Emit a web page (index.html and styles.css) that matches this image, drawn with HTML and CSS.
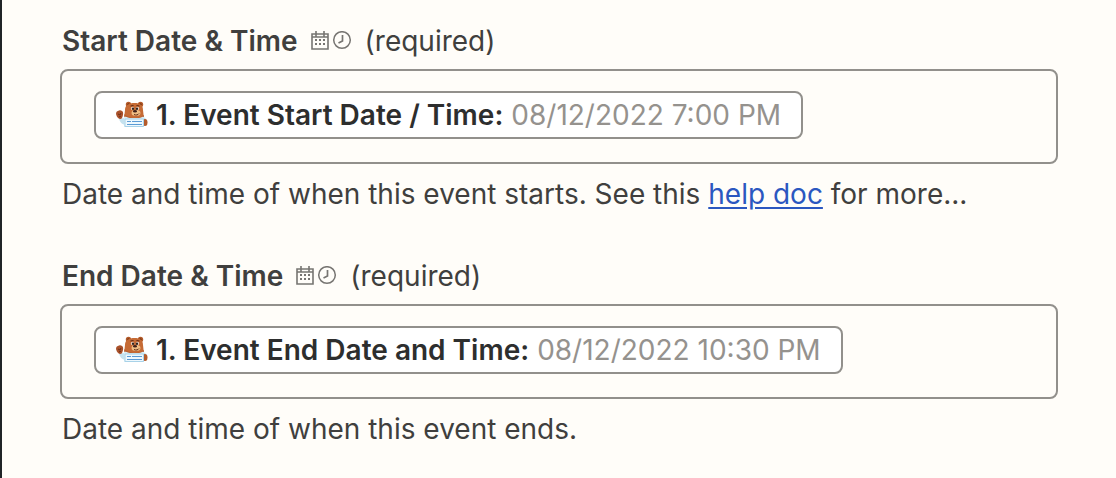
FILE: index.html
```html
<!DOCTYPE html>
<html lang="en">
<head>
    <meta charset="UTF-8">
    <meta name="viewport" content="width=device-width, initial-scale=1.0">
    <title>Event Setup</title>
    <link rel="stylesheet" href="styles.css">
</head>
<body>
    <!-- Shared icons -->
    <svg class="sprite" aria-hidden="true">
        <symbol id="icon-calendar" viewBox="0 0 18 20">
            <path d="M1 3h16v15H1zM1 6h16M5 0v6M13 0v6" fill="none" stroke="currentColor" stroke-width="1.600"/>
            <path d="M4 8h2v2H4zM8 8h2v2H8zM12 8h2v2h-2zM4 12h2v2H4zM8 12h2v2H8zM12 12h2v2h-2z" fill="currentColor"/>
        </symbol>
        <symbol id="icon-clock" viewBox="0 0 20 20">
            <circle cx="10" cy="9" r="8.300" fill="none" stroke="currentColor" stroke-width="1.500"/>
            <path d="M10.500 4v6L6.500 12" fill="none" stroke="currentColor" stroke-width="1.700"/>
        </symbol>
        <symbol id="icon-bear" viewBox="0 0 32 28">
            <!-- Arms -->
            <path d="M3 18l4-1 4 1v6c-5 0-7-3-8-6z" fill="#c5e2ef"/>
            <path d="M25 16c4 0 6 2 6 5l-2 3h-4z" fill="#c5e2ef"/>
            <ellipse cx="29" cy="21.500" rx="2.500" ry="3.500" fill="#b45b2b"/>
            <path d="M0 13c0-2 1-3 2-3 1-1 3-1 4 0 2 1 1 5 0 7-1 2-5 1-6-4z" fill="#a9512a"/>
            <path d="M2 13l2 1 1-2M3 16l2-1" stroke="#6d2f19" fill="none"/>
            <!-- Head -->
            <circle cx="12.500" cy="3.500" r="2.700" fill="#b45b2b"/>
            <circle cx="24.500" cy="3.500" r="2.700" fill="#b45b2b"/>
            <circle cx="12.500" cy="3.500" r="1.200" fill="#793817"/>
            <circle cx="24.500" cy="3.500" r="1.200" fill="#793817"/>
            <path d="M9 9c0-5 4-7 9.500-7S27 4 27 9l1 9H8z" fill="#c66b35"/>
            <path d="M8 13l1 5h19v-4c-2 2-5 3-9 3s-9-2-11-4z" fill="#b65d2e"/>
            <ellipse cx="20" cy="12" rx="4.500" ry="3" fill="#efbd83"/>
            <ellipse cx="16.500" cy="7.500" rx="1.600" ry="1.800" fill="#f5e6da"/>
            <ellipse cx="21.500" cy="7.500" rx="1.600" ry="1.800" fill="#f5e6da"/>
            <circle cx="17" cy="7.800" r="1.200" fill="#332620"/>
            <circle cx="21" cy="7.800" r="1.200" fill="#332620"/>
            <path d="M14.500 5l3-.500M20.500 4.500l3 .500M18 13.500c2 1 4 .500 5-1" stroke="#5b2714" fill="none"/>
            <ellipse cx="19" cy="10.200" rx="2" ry="1.200" fill="#402019"/>
            <!-- Shirt and card -->
            <path d="M8 16c3-1 4 1 6 1h9c2 0 3-2 5-1v10H8z" fill="#d8edf5"/>
            <path d="M9 18h18.500v7.500H9z" fill="#eef8fd" stroke="#a8d2e8"/>
            <path d="M11 20.500h4M16 20.500h10M11 23.500h15" stroke="#5b9bd5" stroke-width="1.200"/>
        </symbol>
    </svg>

    <form class="panel">
        <div class="field">
            <label class="field-label" for="start-time">
                <span class="field-name">Start Date &amp; Time</span>
                <span class="field-type">
                    <svg class="icon-calendar" aria-hidden="true"><use href="#icon-calendar"/></svg>
                    <svg class="icon-clock" aria-hidden="true"><use href="#icon-clock"/></svg>
                </span>
                <span>(required)</span>
            </label>
            <div class="field-box">
                <button class="pill" type="button">
                    <svg class="icon-bear" aria-hidden="true"><use href="#icon-bear"/></svg>
                    <span class="pill-name">1. Event Start Date / Time:</span>
                    <span class="pill-value">08/12/2022 7:00 PM</span>
                </button>
                <input class="field-input" id="start-time" type="text">
            </div>
            <p class="help">Date and time of when this event starts. See this <a href="#">help doc</a> for more...</p>
        </div>

        <div class="field">
            <label class="field-label" for="end-time">
                <span class="field-name">End Date &amp; Time</span>
                <span class="field-type">
                    <svg class="icon-calendar" aria-hidden="true"><use href="#icon-calendar"/></svg>
                    <svg class="icon-clock" aria-hidden="true"><use href="#icon-clock"/></svg>
                </span>
                <span>(required)</span>
            </label>
            <div class="field-box">
                <button class="pill" type="button">
                    <svg class="icon-bear" aria-hidden="true"><use href="#icon-bear"/></svg>
                    <span class="pill-name">1. Event End Date and Time:</span>
                    <span class="pill-value">08/12/2022 10:30 PM</span>
                </button>
                <input class="field-input" id="end-time" type="text">
            </div>
            <p class="help">Date and time of when this event ends.</p>
        </div>
    </form>
</body>
</html>
```
FILE: styles.css
```css
* {
    box-sizing: border-box;
}

body {
    margin: 0;
    background: #fffdf9;
    color: #403f3e;
    font-family: Inter, sans-serif;
    font-size: 28px;
    line-height: 32px;
}

.sprite {
    display: none;
}

.panel {
    display: flex;
    flex-direction: column;
    gap: 50px;
    min-height: 100vh;
    padding: 25px 58px;
    border-left: 2px solid #202427;
}

.field-label {
    display: flex;
    align-items: center;
    gap: 13px;
    margin-bottom: 12px;
    padding-left: 2px;
}

.field-name {
    font-weight: 600;
}

.field-type {
    display: flex;
    align-items: center;
    gap: 3px;
    color: #777572;
}

.icon-calendar {
    width: 18px;
    height: 20px;
}

.icon-clock {
    width: 20px;
    height: 20px;
}

.field-box {
    display: flex;
    align-items: center;
    padding: 20px 32px 23px;
    border: 2px solid #92908c;
    border-radius: 8px;
}

.pill {
    display: flex;
    flex: none;
    align-items: center;
    gap: 8px;
    height: 48px;
    padding: 0 20px;
    border: 2px solid #92908c;
    border-radius: 8px;
    background: #fff;
    color: #2d2e2e;
    font: inherit;
    cursor: pointer;
}

.pill-name {
    font-weight: 600;
}

.pill-value {
    color: #95928e;
}

.icon-bear {
    width: 32px;
    height: 28px;
}

.field-input {
    flex: 1;
    min-width: 0;
    border: none;
    outline: none;
    background: none;
    font: inherit;
}

.help {
    margin: 14px 0 0;
    padding-left: 2px;
}

.help a {
    color: #2b57c0;
    text-underline-offset: 3px;
}
```
